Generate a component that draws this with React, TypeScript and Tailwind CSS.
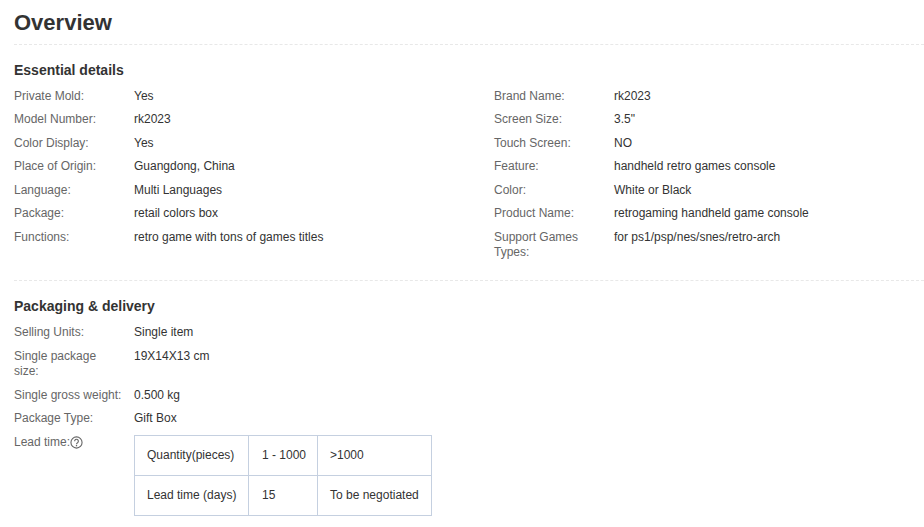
const essentialDetails = [
  ["Private Mold:", "Yes", "Brand Name:", "rk2023"],
  ["Model Number:", "rk2023", "Screen Size:", '3.5"'],
  ["Color Display:", "Yes", "Touch Screen:", "NO"],
  ["Place of Origin:", "Guangdong, China", "Feature:", "handheld retro games console"],
  ["Language:", "Multi Languages", "Color:", "White or Black"],
  ["Package:", "retail colors box", "Product Name:", "retrogaming handheld game console"],
  ["Functions:", "retro game with tons of games titles", "Support Games Types:", "for ps1/psp/nes/snes/retro-arch"],
];

const packaging = [
  ["Selling Units:", "Single item"],
  ["Single package size:", "19X14X13 cm"],
  ["Single gross weight:", "0.500 kg"],
  ["Package Type:", "Gift Box"],
];

function Attr({ label, value }: { label: string; value: string }) {
  return (
    <div className="flex w-[480px] shrink-0">
      <div className="w-[120px] shrink-0 pr-3 text-[#666]">{label}</div>
      <div className="text-[#333]">{value}</div>
    </div>
  );
}

function HelpIcon() {
  return (
    <svg width="13" height="13" viewBox="0 0 14 14" fill="none" className="mt-[1px] shrink-0">
      <circle cx="7" cy="7" r="6" stroke="#666" strokeWidth="1.2" />
      <path d="M5 5.6a2 2 0 1 1 3.1 1.6c-.8.5-1.1.9-1.1 1.6" stroke="#666" strokeWidth="1.2" />
      <rect x="6.3" y="9.7" width="1.4" height="1.4" fill="#666" />
    </svg>
  );
}

export default function App() {
  return (
    <div className="h-[527px] w-[924px] overflow-hidden bg-white pl-[14px] font-['Liberation_Sans',Arial,sans-serif] text-[12px] leading-[15px] text-[#333]">
      <h2 className="h-[45px] border-b border-dashed border-[#e8e8e8] pt-[10px] text-[22px] leading-[26px] font-bold">Overview</h2>

      <h3 className="mt-[17px] text-[14px] leading-[16px] font-bold">Essential details</h3>
      <div className="mt-[10.5px] flex flex-col gap-[8.5px]">
        {essentialDetails.map((row) => (
          <div key={row[0]} className="flex">
            <Attr label={row[0]} value={row[1]} />
            <Attr label={row[2]} value={row[3]} />
          </div>
        ))}
      </div>

      <div className="mt-[20.5px] border-t border-dashed border-[#e8e8e8]" />

      <h3 className="mt-[17px] text-[14px] leading-[16px] font-bold">Packaging &amp; delivery</h3>
      <div className="mt-[11px] flex flex-col gap-[8.75px]">
        {packaging.map((row) => (
          <Attr key={row[0]} label={row[0]} value={row[1]} />
        ))}
        <div className="flex">
          <div className="flex w-[120px] shrink-0 items-start text-[#666]">
            Lead time:
            <HelpIcon />
          </div>
          <table className="border-collapse text-[#333]">
            <tbody>
              <tr className="h-[40px]">
                <td className="w-[114px] border border-[#c5d0e0] pl-[12px]">Quantity(pieces)</td>
                <td className="w-[69px] border border-[#c5d0e0] pl-[13px]">1 - 1000</td>
                <td className="w-[114px] border border-[#c5d0e0] pl-[12px]">&gt;1000</td>
              </tr>
              <tr className="h-[40px]">
                <td className="border border-[#c5d0e0] pl-[12px]">Lead time (days)</td>
                <td className="border border-[#c5d0e0] pl-[13px]">15</td>
                <td className="border border-[#c5d0e0] pl-[12px]">To be negotiated</td>
              </tr>
            </tbody>
          </table>
        </div>
      </div>
    </div>
  );
}
